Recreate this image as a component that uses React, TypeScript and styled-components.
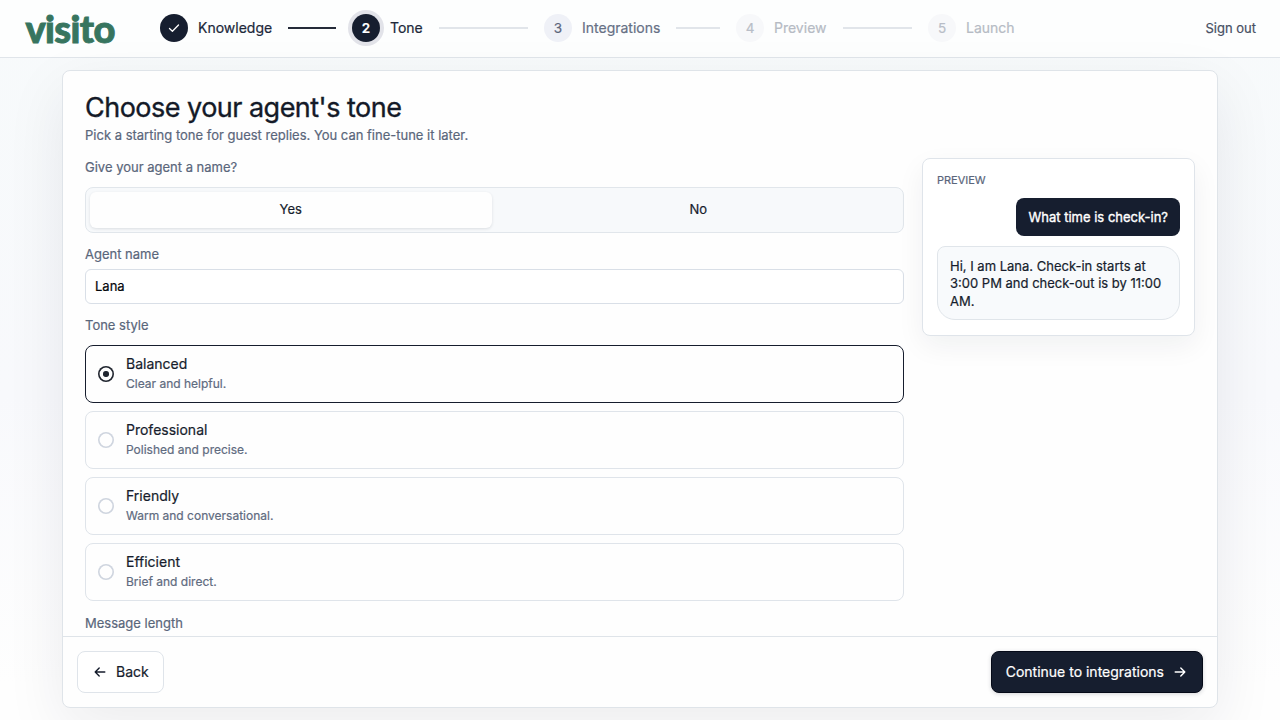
import React, { useState } from "react";
import styled, { createGlobalStyle, css } from "styled-components";

const GlobalStyle = createGlobalStyle`
  *, *::before, *::after { box-sizing: border-box; }
  body {
    margin: 0;
    font-family: Inter, "Liberation Sans", sans-serif;
    color: #161d2d;
    overflow: hidden;
    -webkit-text-stroke: 0.2px currentColor;
  }
  button, input { font-family: inherit; }
`;

const Page = styled.div`
  display: flex;
  flex-direction: column;
  height: 100vh;
  background: linear-gradient(180deg, #f7fafb 0%, #f8f9fc 55%, #fefefe 95%);
`;

const Header = styled.header`
  display: flex;
  align-items: center;
  height: 58px;
  flex: none;
  padding: 0 24px 1px;
  background: #fdfefe;
  border-bottom: 1px solid #e0e5ea;
`;

const Logo = styled.svg`
  display: block;
  width: 100px;
  height: 56px;
  margin-right: 36px;
  flex: none;
`;

const Steps = styled.ol`
  display: flex;
  flex: 1;
  margin: 0;
  padding: 0;
  list-style: none;
`;

type StepState = "done" | "current" | "next" | "later";

const Step = styled.li<{ $last: boolean }>`
  display: flex;
  align-items: center;
  flex: none;
  width: ${(p) => (p.$last ? "auto" : "192px")};
  padding-right: ${(p) => (p.$last ? 0 : "16px")};
`;

const StepBadge = styled.span<{ $state: StepState }>`
  display: grid;
  place-items: center;
  width: 28px;
  height: 28px;
  flex: none;
  border-radius: 50%;
  font-size: 13.5px;
  font-weight: 400;
  ${(p) =>
    p.$state === "done" || p.$state === "current"
      ? css`background: #161e2f; color: #fff;`
      : p.$state === "next"
      ? css`background: #eff1f7; color: #5d667b;`
      : css`background: #f7f8fa; color: #b8bdc7;`}
  ${(p) => p.$state === "current" && css`box-shadow: 0 0 0 4px #e2e3e9; font-weight: 600;`}
`;

const StepLabel = styled.span<{ $state: StepState }>`
  margin-left: 10px;
  font-size: 14px;
  line-height: 20px;
  color: ${(p) =>
    p.$state === "later" ? "#b6bbc4" : p.$state === "next" ? "#667085" : "#20283a"};
`;

const StepLine = styled.span<{ $done: boolean }>`
  flex: 1;
  height: 2px;
  margin-left: 16px;
  background: ${(p) => (p.$done ? "#252b39" : "#e1e5ea")};
`;

const SignOut = styled.a`
  font-size: 13px;
  line-height: 20px;
  color: #475063;
`;

const Card = styled.main`
  display: flex;
  flex-direction: column;
  flex: 1;
  min-height: 0;
  margin: 12px 62px;
  background: #fefefe;
  border: 1px solid #dfe4e9;
  border-radius: 8px;
  box-shadow: 0 20px 60px rgba(22, 28, 47, 0.08);
  overflow: hidden;
`;

const CardBody = styled.div`
  flex: 1;
  min-height: 0;
  overflow: hidden;
  padding: 20px 22px 0;
`;

const Title = styled.h1`
  margin: 0;
  font-size: 27px;
  line-height: 33px;
  font-weight: 400;
  letter-spacing: -0.52px;
  color: #141a28;
  -webkit-text-stroke-width: 0.35px;
`;

const Subtitle = styled.p`
  margin: 1px 0 0;
  font-size: 13px;
  line-height: 20px;
  color: #5a667b;
`;

const Columns = styled.div`
  display: grid;
  grid-template-columns: 3fr 1fr;
  gap: 18px;
  align-items: start;
  margin-top: 13px;
`;

const Form = styled.div`
  display: flex;
  flex-direction: column;
`;

const FieldLabel = styled.div<{ $gap: number }>`
  margin-bottom: ${(p) => p.$gap}px;
  font-size: 13px;
  line-height: 18px;
  color: #5a667b;
`;

const Segmented = styled.div`
  display: grid;
  grid-template-columns: 1fr 1fr;
  gap: 6px;
  height: 46px;
  margin-bottom: 12px;
  padding: 4px;
  background: #f7f9fb;
  border: 1px solid #e1e6eb;
  border-radius: 8px;
`;

const Segment = styled.button<{ $active: boolean }>`
  padding: 0 0 2px;
  border: 0;
  border-radius: 6px;
  background: ${(p) => (p.$active ? "#fefefe" : "transparent")};
  box-shadow: ${(p) => (p.$active ? "0 1px 3px rgba(22, 30, 47, 0.12)" : "none")};
  font-size: 13px;
  color: #161d2d;
`;

const TextInput = styled.input`
  height: 35px;
  margin-bottom: 12px;
  padding: 0 9px 1px;
  border: 1px solid #d9dfe7;
  border-radius: 6px;
  background: #fff;
  font-size: 13px;
  color: #05070c;
  outline: none;
`;

const OptionList = styled.div`
  display: flex;
  flex-direction: column;
  gap: 8px;
  margin-bottom: 13px;
`;

const Option = styled.button<{ $selected: boolean }>`
  display: flex;
  align-items: center;
  gap: 12px;
  height: 58px;
  padding: 0 12px;
  text-align: left;
  background: #fefefe;
  border: 1px solid ${(p) => (p.$selected ? "#161d2d" : "#dfe4ea")};
  border-radius: 8px;
`;

const Radio = styled.span<{ $selected: boolean }>`
  display: grid;
  place-items: center;
  width: 16px;
  height: 16px;
  flex: none;
  border-radius: 50%;
  box-shadow: inset 0 0 0 1.6px ${(p) => (p.$selected ? "#20252f" : "#cfd5df")};
  &::after {
    content: "";
    width: 5.4px;
    height: 5.4px;
    border-radius: 50%;
    background: ${(p) => (p.$selected ? "#20252f" : "transparent")};
  }
`;

const OptionText = styled.span`
  display: flex;
  flex-direction: column;
  gap: 1px;
  padding-bottom: 1px;
`;

const OptionTitle = styled.span`
  font-size: 14px;
  line-height: 20px;
  color: #161d2d;
`;

const OptionHint = styled.span`
  font-size: 12px;
  line-height: 18px;
  color: #5f6b80;
`;

const Preview = styled.aside`
  display: flex;
  flex-direction: column;
  height: 178px;
  padding: 13px 14px 14px;
  background: #fff;
  border: 1px solid #dfe4ea;
  border-radius: 8px;
  box-shadow: 0 10px 28px rgba(22, 30, 47, 0.06);
`;

const PreviewHeading = styled.div`
  font-size: 11px;
  line-height: 16px;
  color: #5a667b;
`;

const GuestBubble = styled.div`
  align-self: flex-end;
  margin-top: 10px;
  padding: 10px 12px;
  border-radius: 8px;
  background: #161e2f;
  color: #fff;
  font-size: 13px;
  line-height: 18px;
  -webkit-text-stroke-width: 0.35px;
`;

const AgentBubble = styled.div`
  margin-top: 10px;
  padding: 10.7px 12px 9.3px;
  border: 1px solid #e0e5ea;
  border-radius: 8px 18px 18px 18px;
  background: #f8fafc;
  color: #161d2d;
  font-size: 13px;
  line-height: 17.5px;
`;

const Footer = styled.footer`
  display: flex;
  align-items: center;
  justify-content: space-between;
  flex: none;
  height: 71px;
  padding: 0 14px;
  border-top: 1px solid #dfe4e9;
`;

const FooterButton = styled.button<{ $primary?: boolean }>`
  display: flex;
  align-items: center;
  gap: 8px;
  height: 42px;
  padding: 0 14px 1px;
  border-radius: 8px;
  font-size: 14px;
  line-height: 19px;
  ${(p) =>
    p.$primary
      ? css`
          background: #161e2f;
          color: #fff;
          border: 1px solid #050a18;
          box-shadow: 0 1px 4px rgba(22, 30, 47, 0.18);
        `
      : css`
          background: #fff;
          color: #161d2d;
          border: 1px solid #dfe4ea;
        `}
`;

const ArrowIcon = ({ left }: { left?: boolean }) => (
  <svg width="16" height="16" viewBox="0 0 16 16" fill="none" stroke="currentColor" strokeWidth="1.4" strokeLinecap="round" strokeLinejoin="round">
    <path d={left ? "M12.8 8H3.2M7.2 4L3.2 8l4 4" : "M3.2 8h9.6M8.8 4l4 4-4 4"} />
  </svg>
);

const CheckIcon = () => (
  <svg width="14" height="14" viewBox="0 0 14 14" fill="none" stroke="currentColor" strokeWidth="1.3" strokeLinecap="round" strokeLinejoin="round">
    <path d="M2.5 7.5L5.4 10.2L11.5 4" />
  </svg>
);

const steps: { label: string; state: StepState }[] = [
  { label: "Knowledge", state: "done" },
  { label: "Tone", state: "current" },
  { label: "Integrations", state: "next" },
  { label: "Preview", state: "later" },
  { label: "Launch", state: "later" },
];

const tones = [
  { name: "Balanced", hint: "Clear and helpful." },
  { name: "Professional", hint: "Polished and precise." },
  { name: "Friendly", hint: "Warm and conversational." },
  { name: "Efficient", hint: "Brief and direct." },
];

export default function App() {
  const [named, setNamed] = useState(true);
  const [name, setName] = useState("Lana");
  const [tone, setTone] = useState("Balanced");

  return (
    <>
      <GlobalStyle />
      <Page>
        <Header>
          <Logo viewBox="0 0 100 56" role="img" aria-label="visito">
            <text x="1.4" y="42.8" fontFamily="Lato, sans-serif" fontWeight="900" fontSize="38" fill="#37755f" stroke="#37755f" strokeWidth="0.9" textLength="90" lengthAdjust="spacing">
              visito
            </text>
          </Logo>
          <Steps>
            {steps.map((s, i) => {
              const last = i === steps.length - 1;
              return (
                <Step key={s.label} $last={last}>
                  <StepBadge $state={s.state}>{s.state === "done" ? <CheckIcon /> : i + 1}</StepBadge>
                  <StepLabel $state={s.state}>{s.label}</StepLabel>
                  {!last && <StepLine $done={s.state === "done"} />}
                </Step>
              );
            })}
          </Steps>
          <SignOut>Sign out</SignOut>
        </Header>
        <Card>
          <CardBody>
            <Title>Choose your agent's tone</Title>
            <Subtitle>Pick a starting tone for guest replies. You can fine-tune it later.</Subtitle>
            <Columns>
              <Form>
                <FieldLabel $gap={11}>Give your agent a name?</FieldLabel>
                <Segmented>
                  <Segment $active={named} onClick={() => setNamed(true)}>Yes</Segment>
                  <Segment $active={!named} onClick={() => setNamed(false)}>No</Segment>
                </Segmented>
                <FieldLabel $gap={6}>Agent name</FieldLabel>
                <TextInput value={name} onChange={(e) => setName(e.target.value)} />
                <FieldLabel $gap={11}>Tone style</FieldLabel>
                <OptionList>
                  {tones.map((t) => (
                    <Option key={t.name} $selected={t.name === tone} onClick={() => setTone(t.name)}>
                      <Radio $selected={t.name === tone} />
                      <OptionText>
                        <OptionTitle>{t.name}</OptionTitle>
                        <OptionHint>{t.hint}</OptionHint>
                      </OptionText>
                    </Option>
                  ))}
                </OptionList>
                <FieldLabel $gap={0}>Message length</FieldLabel>
              </Form>
              <Preview>
                <PreviewHeading>PREVIEW</PreviewHeading>
                <GuestBubble>What time is check-in?</GuestBubble>
                <AgentBubble>{`Hi, I am ${name}. Check-in starts at 3:00 PM and check-out is by 11:00 AM.`}</AgentBubble>
              </Preview>
            </Columns>
          </CardBody>
          <Footer>
            <FooterButton>
              <ArrowIcon left />
              Back
            </FooterButton>
            <FooterButton $primary>
              Continue to integrations
              <ArrowIcon />
            </FooterButton>
          </Footer>
        </Card>
      </Page>
    </>
  );
}
